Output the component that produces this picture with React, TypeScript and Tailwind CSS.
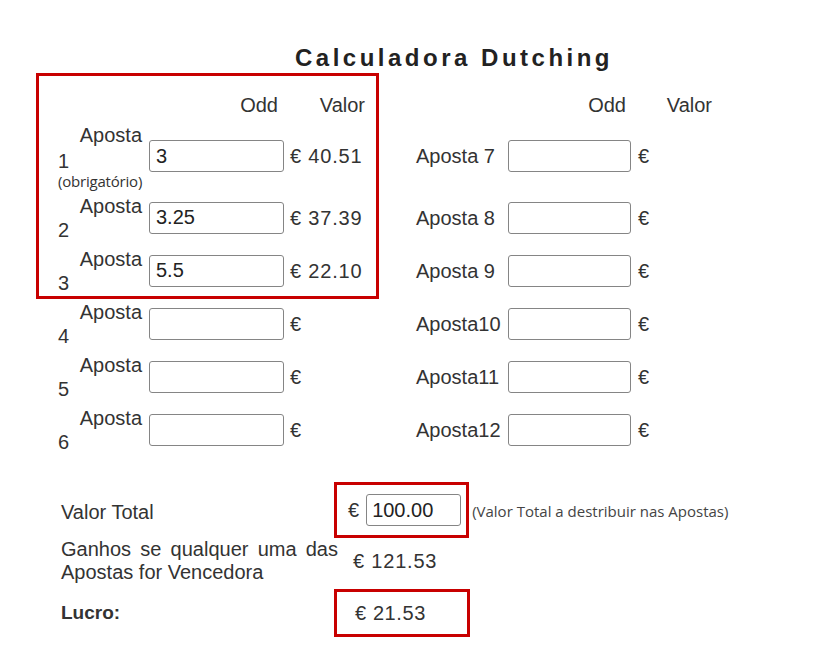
import React from "react";

const leftRows = [
  { n: "1", odd: "3", val: "€ 40.51", req: true },
  { n: "2", odd: "3.25", val: "€ 37.39" },
  { n: "3", odd: "5.5", val: "€ 22.10" },
  { n: "4", odd: "", val: "€" },
  { n: "5", odd: "", val: "€" },
  { n: "6", odd: "", val: "€" },
];
const rightLabels = ["Aposta 7", "Aposta 8", "Aposta 9", "Aposta10", "Aposta11", "Aposta12"];

function OddInput({ value, w }: { value: string; w: string }) {
  return (
    <input
      readOnly
      value={value}
      className={`${w} h-[32px] border-[1.5px] border-[#858585] rounded-[3px] px-[6px] text-[20px] text-[#222] bg-white outline-none font-['Liberation_Sans',Arial,sans-serif]`}
    />
  );
}

export default function App() {
  return (
    <div className="relative w-[833px] h-[658px] bg-white text-[#333] font-['Liberation_Sans',Arial,sans-serif] overflow-hidden">
      <h1 className="pt-[44px] pl-[295px] text-[24px] leading-[28px] font-bold tracking-[3.5px] text-[#222]">
        Calculadora Dutching
      </h1>

      <div className="mt-[21px] pl-[58px] grid grid-cols-[91px_141px_126px_92px_130px_74px] grid-rows-[28px_70px_53px_53px_53px_53px_53px] text-[20px] leading-[24px]">
        {/* header */}
        <div />
        <div className="w-[135px] pr-[6px] text-right">Odd</div>
        <div className="w-[75px] text-right">Valor</div>
        <div />
        <div className="w-[123px] pr-[5px] text-right">Odd</div>
        <div className="w-[74px] text-right">Valor</div>

        {leftRows.map((r, i) => (
          <React.Fragment key={r.n}>
            <div className="flex items-center">
              <div className="flex flex-col w-[84px]">
                <span className="self-end">Aposta</span>
                <span className={r.req ? "mt-[2px]" : ""}>{r.n}</span>
                {r.req && (
                  <span className="text-[15px] leading-[16px] font-['Open_Sans',Arial,sans-serif] tracking-[-0.2px]">(obrigatório)</span>
                )}
              </div>
            </div>
            <div className="flex items-center">
              <OddInput value={r.odd} w="w-[135px]" />
            </div>
            <div className="flex items-center tracking-[0.8px]">{r.val}</div>
            <div className="flex items-center">{rightLabels[i]}</div>
            <div className="flex items-center">
              <OddInput value="" w="w-[123px]" />
            </div>
            <div className="flex items-center">€</div>
          </React.Fragment>
        ))}
      </div>

      <div className="mt-[26px] pl-[61px] grid grid-cols-[282px_auto] grid-rows-[56px_51px_48px] text-[20px]">
        <div className="flex items-center pt-[3px] leading-[24px]">Valor Total</div>
        <div className="relative flex items-center pl-[5px]">
          <span>€</span>
          <input
            readOnly
            value="100.00"
            className="ml-[7px] w-[95px] h-[32px] border-[1.5px] border-[#858585] rounded-[3px] px-[5px] text-[20px] text-[#222] bg-white outline-none font-['Liberation_Sans',Arial,sans-serif]"
          />
          <span className="ml-[11px] mt-[3px] text-[15px] font-['Open_Sans',Arial,sans-serif] text-[#444]">
            (Valor Total a destribuir nas Apostas)
          </span>
          <div className="absolute -left-[9px] top-0 w-[135px] h-[56px] border-[3px] border-[#c80000]" />
        </div>

        <div className="flex items-center pb-[5px]">
          <p className="w-[277px] text-justify leading-[23px]">
            Ganhos se qualquer uma das Apostas for Vencedora
          </p>
        </div>
        <div className="flex items-center pl-[10px] pb-[5px] tracking-[0.8px]">€ 121.53</div>

        <div className="flex items-center text-[19px] font-bold">Lucro:</div>
        <div className="relative flex items-center pl-[12px]">
          <span className="tracking-[0.6px]">€ 21.53</span>
          <div className="absolute -left-[9px] top-0 w-[136px] h-[48px] border-[3px] border-[#c80000]" />
        </div>
      </div>

      <div className="absolute left-[36px] top-[73px] w-[343px] h-[226px] border-[3px] border-[#c80000] pointer-events-none" />
    </div>
  );
}
